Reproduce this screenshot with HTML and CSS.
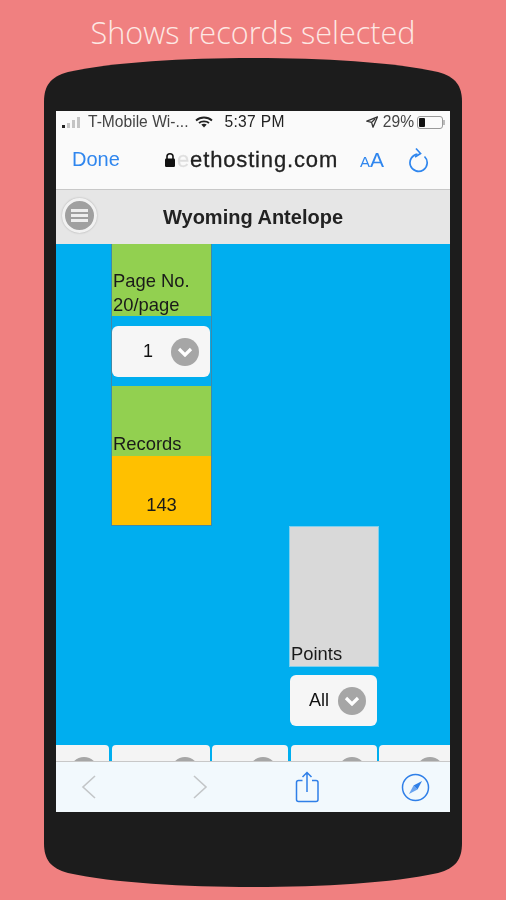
FILE: index.html
```html
<!DOCTYPE html>
<html lang="en">
<head>
    <meta charset="UTF-8">
    <meta name="viewport" content="width=device-width, initial-scale=1.0">
    <title>Wyoming Antelope</title>
    <link rel="stylesheet" href="styles.css">
</head>
<body>
    <h1 class="caption">Shows records selected</h1>

    <div class="phone">
        <svg class="phone-body" width="418" height="829" viewBox="0 0 418 829">
            <path d="M0 44 C0 28 6 19 24 14 C70 4 140 0 209 0 C278 0 348 4 394 14 C412 19 418 28 418 44 V785 C418 801 412 810 394 815 C348 825 278 829 209 829 C140 829 70 825 24 815 C6 810 0 801 0 785 Z" fill="#1c1c1c"/>
        </svg>

        <div class="screen">
            <div class="status-bar">
                <div class="status-left">
                    <span class="signal"><i></i><i></i><i></i><i></i></span>
                    <span class="carrier">T-Mobile Wi-...</span>
                    <svg class="wifi" width="18" height="12" viewBox="0 0 18 12">
                        <path d="M1 4.5 C5.5 .5 12.5 .5 17 4.5" fill="none" stroke="#222" stroke-width="1.8"/>
                        <path d="M4 7 C6.5 4.8 11.5 4.8 14 7" fill="none" stroke="#222" stroke-width="1.8"/>
                        <path d="M6.3 8.6 C8 7.4 10 7.4 11.7 8.6 L9 11.5 Z" fill="#222"/>
                    </svg>
                </div>
                <span class="clock">5:37 PM</span>
                <div class="status-right">
                    <svg width="12" height="12" viewBox="0 0 12 12">
                        <path d="M11.5 .8 L.8 5.2 L5.6 6.4 L7 11.2 Z M9 3 L5.6 6.4" fill="none" stroke="#333" stroke-width="1.3" stroke-linejoin="round"/>
                    </svg>
                    <span>29%</span>
                    <span class="battery"><i></i></span>
                </div>
            </div>

            <div class="browser-bar">
                <span class="done">Done</span>
                <div class="address">
                    <svg width="12" height="16" viewBox="0 0 12 16">
                        <path d="M3 7 V4.5 C3 .8 9 .8 9 4.5 V7" fill="none" stroke="#111" stroke-width="1.6"/>
                        <rect x="1" y="6.5" width="10" height="8.5" rx="1.2" fill="#111"/>
                    </svg>
                    <span class="url"><span class="url-fade">e</span>ethosting.com</span>
                </div>
                <span class="reader"><span class="reader-small">A</span>A</span>
                <svg class="reload" width="22" height="26" viewBox="0 0 22 26">
                    <path d="M9.5 7.2 A8.6 8.6 0 1 0 16.5 9.5" fill="none" stroke="#2f86ee" stroke-width="1.7"/>
                    <path d="M8 1.5 L12.5 6.5 L7 10" fill="none" stroke="#2f86ee" stroke-width="1.7"/>
                </svg>
            </div>

            <div class="page-header">
                <button class="menu-btn" type="button"><i></i><i></i><i></i></button>
                <span class="page-title">Wyoming Antelope</span>
            </div>

            <div class="content">
                <div class="columns">
                    <div class="col-records">
                        <div class="cell cell-green cell-page">Page No.<br>20/page</div>
                        <div class="select-wrap">
                            <div class="select select-page"><span class="select-value">1</span><span class="knob"><svg width="16" height="10" viewBox="0 0 16 10"><path d="M2 2 L8 8 L14 2" fill="none" stroke="#fff" stroke-width="3.2"/></svg></span></div>
                        </div>
                        <div class="cell cell-green cell-rec">Records</div>
                        <div class="cell cell-orange">143</div>
                    </div>
                    <div class="col-points">
                        <div class="cell cell-grey">Points</div>
                        <div class="select select-points"><span class="select-value">All</span><span class="knob"><svg width="16" height="10" viewBox="0 0 16 10"><path d="M2 2 L8 8 L14 2" fill="none" stroke="#fff" stroke-width="3.2"/></svg></span></div>
                    </div>
                </div>
                <div class="cut-row">
                    <div class="cut cut-a"><span class="cut-knob"></span></div>
                    <div class="cut cut-b"><span class="cut-knob"></span></div>
                    <div class="cut cut-c"><span class="cut-knob"></span></div>
                    <div class="cut cut-d"><span class="cut-knob"></span></div>
                    <div class="cut cut-e"><span class="cut-knob"></span></div>
                </div>
            </div>

            <div class="toolbar">
                <svg class="tool-back" width="16" height="26" viewBox="0 0 16 26">
                    <path d="M14 2 L2 13 L14 24" fill="none" stroke="#c3c6c8" stroke-width="1.6"/>
                </svg>
                <svg class="tool-forward" width="16" height="26" viewBox="0 0 16 26">
                    <path d="M2 2 L14 13 L2 24" fill="none" stroke="#c3c6c8" stroke-width="1.6"/>
                </svg>
                <svg class="tool-share" width="26" height="32" viewBox="0 0 26 32">
                    <path d="M8.5 9.5 H4.5 Q2.5 9.5 2.5 11.5 V28.5 Q2.5 30.5 4.5 30.5 H22 Q24 30.5 24 28.5 V11.5 Q24 9.5 22 9.5 H18" fill="none" stroke="#2f7fe8" stroke-width="1.5"/>
                    <path d="M13 21 V2 M8.5 6 L13 1.5 L17.5 6" fill="none" stroke="#2f7fe8" stroke-width="1.5"/>
                </svg>
                <svg class="tool-compass" width="29" height="29" viewBox="0 0 29 29">
                    <circle cx="14.5" cy="14.5" r="13" fill="none" stroke="#2f7fe8" stroke-width="1.5"/>
                    <path d="M21 8 L16.5 16.5 L12.5 12.5 Z" fill="#2f7fe8"/>
                    <path d="M8 21 L12.5 12.5 L16.5 16.5 Z" fill="#2f7fe8" opacity=".7"/>
                </svg>
            </div>
        </div>
    </div>
</body>
</html>
```

FILE: styles.css
```css
body {
    margin: 0;
    height: 900px;
    overflow: hidden;
    background-color: #f08080;
    font-family: "Liberation Sans", Arial, sans-serif;
}
.caption {
    margin: 0;
    height: 58px;
    padding-top: 12px;
    box-sizing: border-box;
    text-align: center;
    font-family: "Open Sans", sans-serif;
    font-size: 30.6px;
    line-height: 40px;
    font-weight: 300;
    color: #fde8e4;
}
.phone {
    position: relative;
    width: 418px;
    height: 829px;
    margin-left: 44px;
    padding: 53px 12px 0;
    box-sizing: border-box;
}
.phone-body {
    position: absolute;
    top: 0;
    left: 0;
}
.screen {
    position: relative;
    width: 394px;
    height: 701px;
    background: #fafafa;
    display: flex;
    flex-direction: column;
    overflow: hidden;
    filter: blur(.45px);
}

/* status bar */
.status-bar {
    height: 22px;
    flex: none;
    display: flex;
    align-items: center;
    font-size: 15.6px;
    color: #444;
    position: relative;
}
.status-left {
    display: flex;
    align-items: center;
    padding-left: 6px;
}
.signal {
    display: flex;
    align-items: flex-end;
    gap: 2px;
    height: 11px;
    margin-right: 8px;
}
.signal i {
    width: 3px;
    background: #c4c4c4;
}
.signal i:nth-child(1) { height: 3px; background: #222; }
.signal i:nth-child(2) { height: 5px; }
.signal i:nth-child(3) { height: 8px; }
.signal i:nth-child(4) { height: 11px; }
.wifi {
    margin-left: 6px;
}
.clock {
    margin-left: 12px;
    color: #222;
    letter-spacing: .3px;
}
.status-right {
    margin-left: auto;
    margin-right: 7px;
    display: flex;
    align-items: center;
    gap: 5px;
}
.battery {
    position: relative;
    width: 22px;
    height: 9px;
    border: 1px solid #999;
    border-radius: 3px;
    margin-left: -2px;
    padding: 1px;
}
.battery::after {
    content: "";
    position: absolute;
    top: 3px;
    right: -3px;
    width: 2px;
    height: 5px;
    background: #bbb;
}
.battery i {
    display: block;
    width: 6px;
    height: 9px;
    background: #111;
    border-radius: 1px;
}

/* browser bar */
.browser-bar {
    height: 53px;
    flex: none;
    display: flex;
    align-items: center;
    background: #fafafa;
    border-bottom: 1px solid #c8c8c8;
    padding-bottom: 3px;
}
.done {
    margin-left: 16px;
    font-size: 20px;
    color: #2f86ee;
    width: 51px;
}
.address {
    margin-left: 41px;
    display: flex;
    align-items: center;
    gap: 6px;
    width: 187px;
}
.url {
    font-size: 22px;
    color: #222;
    white-space: nowrap;
    letter-spacing: .85px;
    -webkit-text-stroke: .3px #222;
}
.url-fade {
    opacity: .12;
    margin-left: -5px;
}
.reader {
    margin-left: 9px;
    color: #2f86ee;
    font-size: 21px;
}
.reader-small {
    font-size: 15px;
}
.reload {
    margin-left: 24px;
}

/* page header */
.page-header {
    height: 54px;
    flex: none;
    background: #e6e6e6;
    display: flex;
    align-items: center;
    justify-content: center;
    position: relative;
}
.page-title {
    font-size: 20px;
    font-weight: bold;
    color: #222;
}
.menu-btn {
    position: absolute;
    top: 8px;
    left: 6px;
    width: 35px;
    height: 35px;
    padding: 6px;
    border: 3px solid #f2f2f2;
    border-radius: 50%;
    background: #a0a0a0;
    box-shadow: 0 0 2px rgba(0,0,0,.25);
    display: flex;
    flex-direction: column;
    justify-content: center;
    gap: 2px;
    box-sizing: border-box;
}
.menu-btn i {
    display: block;
    height: 3px;
    background: #eee;
}

/* blue content */
.content {
    flex: 1;
    background: #00aeef;
    display: flex;
    flex-direction: column;
    overflow: hidden;
}
.columns {
    flex: 1;
    display: grid;
    grid-template-columns: 101px 90px;
    column-gap: 77px;
    padding-left: 55px;
    align-items: start;
}
.col-records {
    border: 1px solid #3f8aa8;
    border-top: none;
    box-sizing: border-box;
    width: 101px;
}
.col-points {
    margin-top: 282px;
}
.cell {
    font-size: 18.4px;
    line-height: 24px;
    color: #1a1a1a;
    display: flex;
    align-items: flex-end;
    padding: 0 1px;
    box-sizing: border-box;
}
.cell-green {
    background: #92d050;
}
.cell-page {
    height: 72px;
    display: block;
    padding-top: 25px;
}
.cell-rec {
    height: 70px;
}
.cell-orange {
    height: 69px;
    background: #ffc000;
    justify-content: center;
    padding-bottom: 8px;
}
.cell-grey {
    height: 139px;
    width: 88px;
    margin: 1px 0 0 1px;
    padding-left: 1px;
    background: #d9d9d9;
    box-shadow: 0 0 0 1px #7fd0ee;
}
.select-wrap {
    background: #00aeef;
    padding: 10px 0 9px;
}
.select {
    height: 51px;
    background: #f6f6f6;
    border-radius: 6px;
    display: flex;
    align-items: center;
    font-size: 18px;
    color: #111;
    box-sizing: border-box;
}
.select-page {
    width: 98px;
    padding-left: 31px;
}
.select-points {
    width: 87px;
    margin-top: 9px;
    margin-left: 1px;
    padding-left: 19px;
}
.select-value {
    flex: 1;
}
.knob {
    width: 28px;
    height: 28px;
    border-radius: 50%;
    background: #a6a6a6;
    display: flex;
    align-items: center;
    justify-content: center;
    margin-right: 11px;
}

/* row cut off by the toolbar */
.cut-row {
    height: 16px;
    flex: none;
    display: flex;
    justify-content: space-between;
    overflow: hidden;
}
.cut {
    height: 16px;
    background: #f4f4f4;
    border-radius: 4px 4px 0 0;
    position: relative;
}
.cut-a { width: 53px; border-radius: 0 4px 0 0; }
.cut-b { width: 98px; }
.cut-c { width: 76px; }
.cut-d { width: 86px; }
.cut-e { width: 71px; border-radius: 4px 0 0 0; }
.cut-knob {
    position: absolute;
    top: 12px;
    right: 11px;
    width: 28px;
    height: 28px;
    border-radius: 50%;
    background: #a6a6a6;
}
.cut-e .cut-knob {
    right: 6px;
}

/* bottom toolbar */
.toolbar {
    height: 51px;
    flex: none;
    background: #f2f9fd;
    border-top: 1px solid #c8c8c8;
    box-sizing: border-box;
    display: flex;
    align-items: center;
    padding-left: 25px;
}
.tool-forward {
    margin-left: 95px;
}
.tool-share {
    margin-left: 86px;
}
.tool-compass {
    margin-left: 81px;
}
```
